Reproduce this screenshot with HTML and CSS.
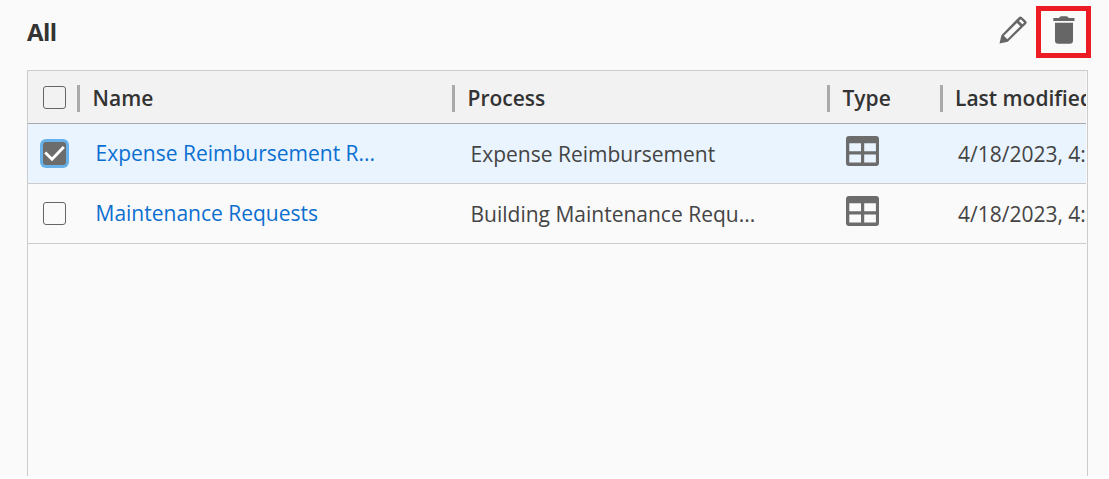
FILE: index.html
```html
<!DOCTYPE html>
<html lang="en">
<head>
<meta charset="utf-8">
<title>All</title>
<link rel="stylesheet" href="styles.css">
</head>
<body>
<svg class="defs" aria-hidden="true">
  <symbol id="grid-icon" viewBox="0 0 33 30">
    <path fill="#6c6c6c" fill-rule="evenodd" d="M3 0H30Q33 0 33 3V27Q33 30 30 30H3Q0 30 0 27V3Q0 0 3 0ZM3.3 7.3V15.2H15V7.3ZM18.2 7.3V15.2H29.9V7.3ZM3.3 18.5V26.4H15V18.5ZM18.2 18.5V26.4H29.9V18.5Z"/>
  </symbol>
</svg>
<main class="page">
  <header class="toolbar">
    <h1 class="title">All</h1>
    <div class="actions">
      <button class="edit" aria-label="Edit">
        <svg width="30" height="30" viewBox="0 0 30 30"><path fill="#666" fill-rule="evenodd" d="M1.5 28.5L3.4 20.3L20.6 2.5Q22.3 .8 24 2.3L28 6.1Q29.3 7.6 28 9L9.8 26.8ZM5.9 20.8L9.3 24.2L22.3 11.3L18.9 7.9ZM21 5.9L24.4 9.3L26.1 7.6L22.7 4.2Z"/></svg>
      </button>
      <button class="delete" aria-label="Delete">
        <svg width="45" height="42" viewBox="0 0 45 42"><path fill="#666" d="M12.3 7H18L19 5.7Q19.5 5.2 20.2 5.2H25.5Q26.2 5.2 26.7 5.7L27.7 7H33.5V10H12.3ZM14 11.7H32V29.5Q32 32.7 28.8 32.7H17.2Q14 32.7 14 29.5Z"/></svg>
      </button>
    </div>
  </header>
  <section class="table">
    <div class="row head">
      <div class="check"><span class="box"></span></div>
      <div class="heading">Name</div>
      <div class="heading">Process</div>
      <div class="heading">Type</div>
      <div class="heading">Last modified</div>
    </div>
    <div class="row selected">
      <div class="check"><span class="box checked"><svg width="23" height="23" viewBox="0 0 23 23"><path d="M2.2 10.5L9 17.2L20.8 5" fill="none" stroke="#fff" stroke-width="2.9"/></svg></span></div>
      <a class="cell link">Expense Reimbursement R...</a>
      <div class="cell">Expense Reimbursement</div>
      <div class="type"><svg width="33" height="30"><use href="#grid-icon"/></svg></div>
      <div class="cell">4/18/2023, 4:</div>
    </div>
    <div class="row">
      <div class="check"><span class="box"></span></div>
      <a class="cell link">Maintenance Requests</a>
      <div class="cell">Building Maintenance Requ...</div>
      <div class="type"><svg width="33" height="30"><use href="#grid-icon"/></svg></div>
      <div class="cell">4/18/2023, 4:</div>
    </div>
  </section>
</main>
</body>
</html>
```
FILE: styles.css
```css
* { box-sizing: border-box; }
body { margin: 0; background: #fff; overflow: hidden; font-family: "Open Sans", sans-serif; font-size: 21px; color: #444; }
.defs { display: none; }
svg { display: block; }
.page { width: 1108px; height: 476px; background: #fafafa; padding: 6px 17px 0 27px; display: flex; flex-direction: column; }
.toolbar { height: 64px; display: flex; justify-content: space-between; align-items: flex-start; }
.title { margin: 11px 0 0; font-size: 24px; line-height: 30px; font-weight: 700; font-stretch: 90%; letter-spacing: -0.6px; color: #333; }
.actions { display: flex; gap: 8px; }
.actions button { background: none; padding: 0; border: 0; }
.edit { height: 30px; margin-top: 9px; }
.actions .delete { width: 55px; height: 52px; border: 5px solid #ed1c24; }
.table { width: 1061px; flex: 1; border: 1px solid #ccc; border-bottom: 0; padding-right: 1px; }
.row { height: 60px; display: grid; grid-template-columns: 49px 375px 375px 113px minmax(0, 1fr); align-items: center; border-bottom: 1px solid #ccc; overflow: hidden; white-space: nowrap; }
.head { height: 53px; background: #f2f2f2; border-color: #aaa; }
.selected { background: #e9f4ff; }
.check { padding-left: 15px; }
.box { display: block; width: 23px; height: 23px; border: 1px solid #666; border-radius: 3px; }
.checked { border: 0; background: #6c6c6c; box-shadow: 0 0 0 3px #68b0e8; }
.heading { height: 27px; line-height: 27px; padding-left: 12.5px; border-left: 3px solid #aaa; font-weight: 600; color: #333; overflow: hidden; margin-top: 2px; }
.heading:last-child { padding-left: 12px; }
.cell { padding: 0 0 0 18.5px; overflow: hidden; }
.cell:last-child { padding-left: 18px; }
.link { color: #0b6fd0; padding-bottom: 2px; }
.type { padding: 0 0 5px 19px; }
```
